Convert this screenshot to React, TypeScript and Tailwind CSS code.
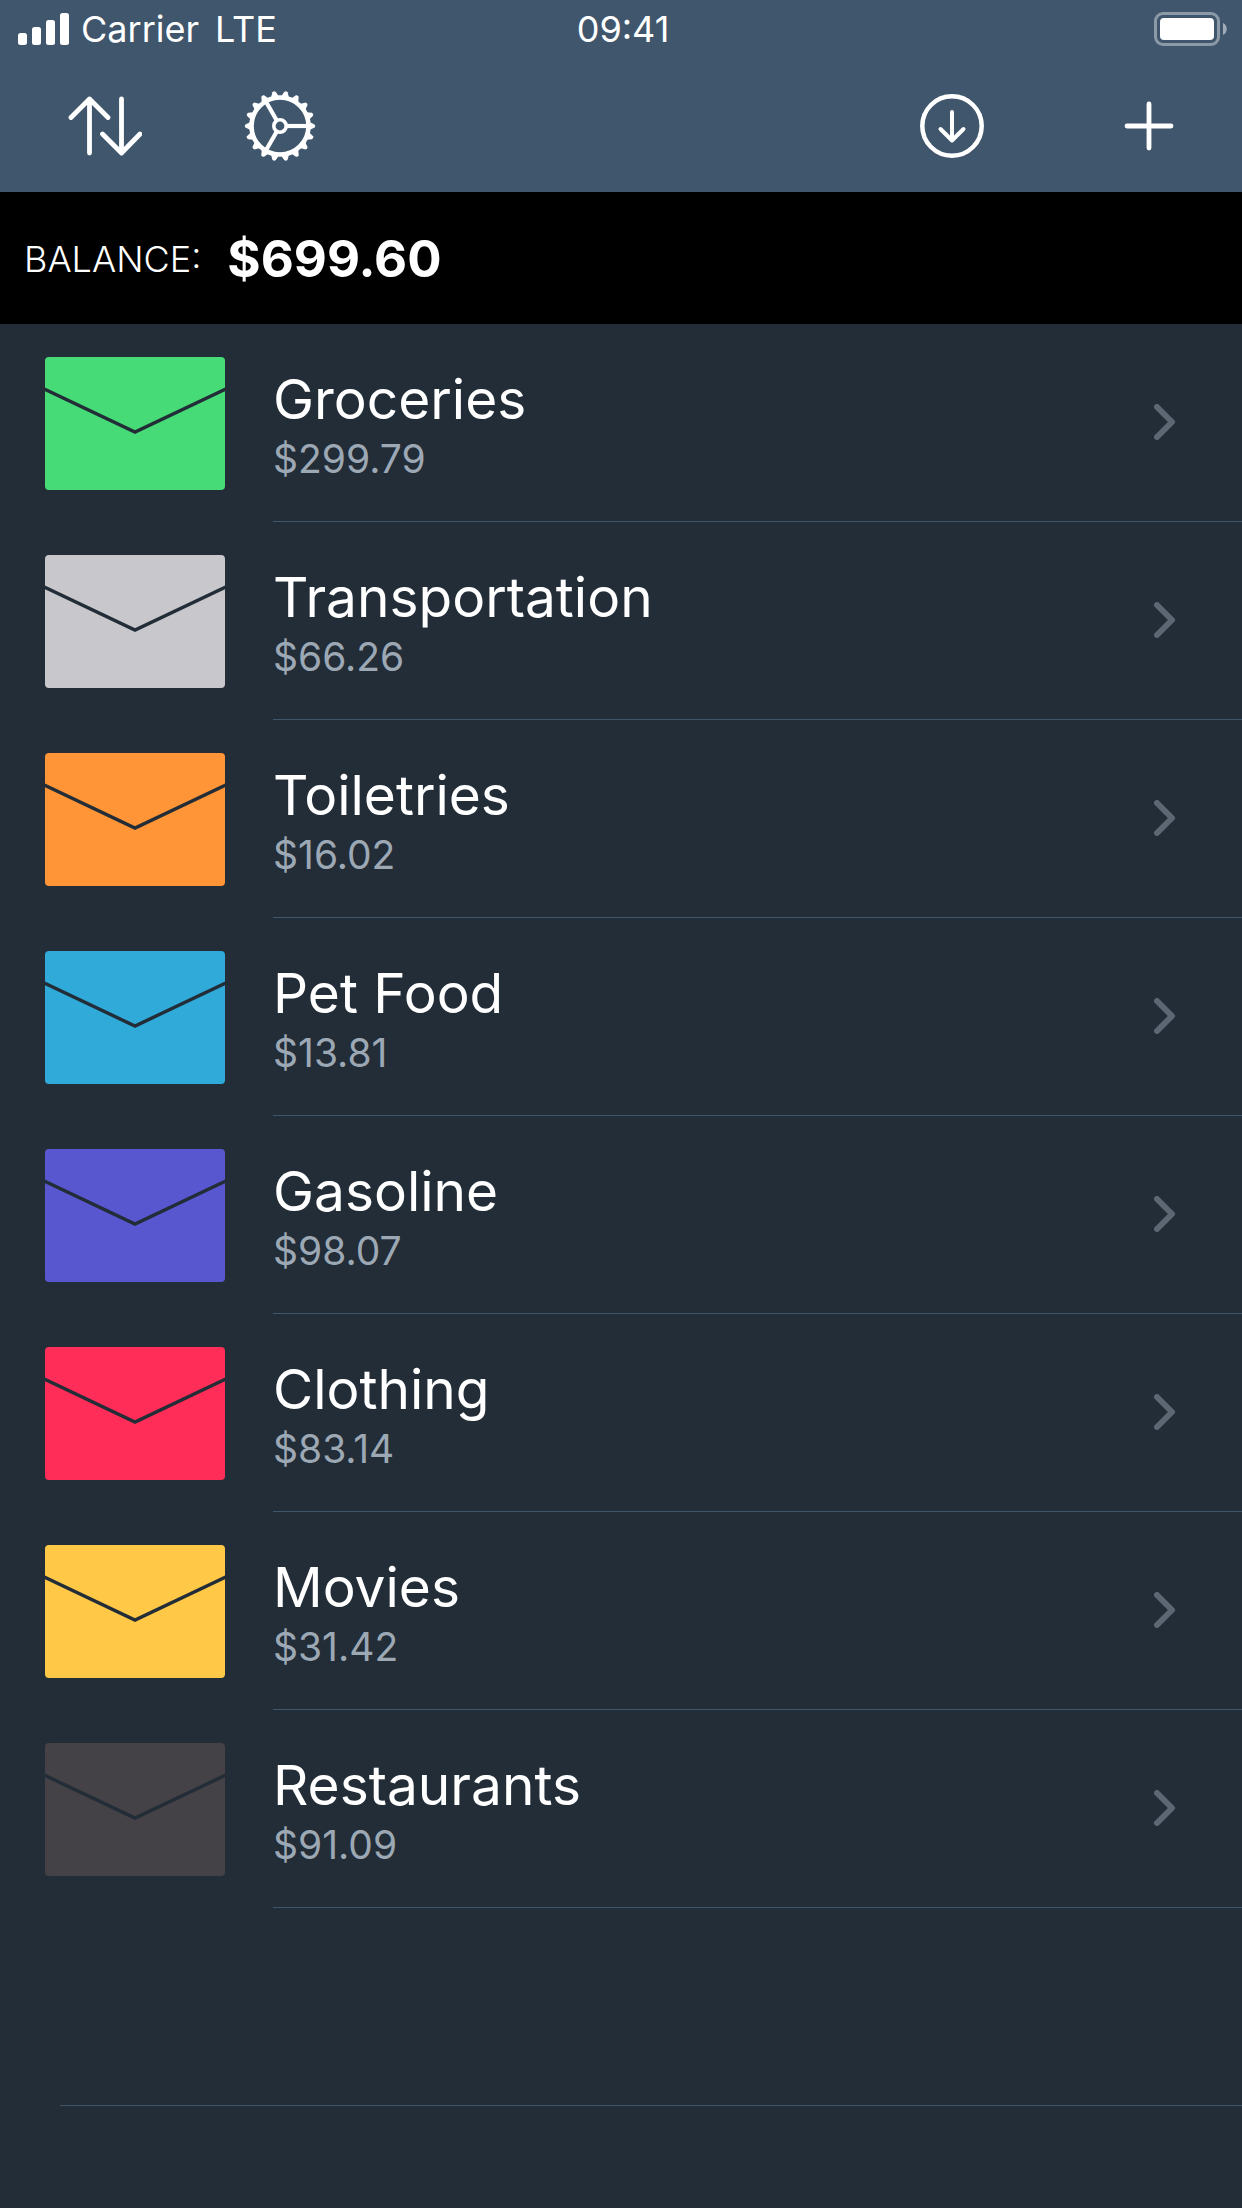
type Envelope = { name: string; amount: string; color: string };

const envelopes: Envelope[] = [
  { name: "Groceries", amount: "$299.79", color: "text-[#47db77]" },
  { name: "Transportation", amount: "$66.26", color: "text-[#c8c7cc]" },
  { name: "Toiletries", amount: "$16.02", color: "text-[#ff9536]" },
  { name: "Pet Food", amount: "$13.81", color: "text-[#30aad9]" },
  { name: "Gasoline", amount: "$98.07", color: "text-[#5957cf]" },
  { name: "Clothing", amount: "$83.14", color: "text-[#ff2d57]" },
  { name: "Movies", amount: "$31.42", color: "text-[#ffc847]" },
  { name: "Restaurants", amount: "$91.09", color: "text-[#444246]" },
];

const teeth = Array.from({ length: 18 }, (_, i) => i * 20);

function SignalIcon() {
  return (
    <svg width="51" height="32" viewBox="0 0 51 32" fill="currentColor" aria-hidden="true">
      <rect x="0" y="20" width="9" height="12" rx="2.5" />
      <rect x="14" y="14" width="9" height="18" rx="2.5" />
      <rect x="28" y="7" width="9" height="25" rx="2.5" />
      <rect x="42" y="0" width="9" height="32" rx="2.5" />
    </svg>
  );
}

function BatteryIcon() {
  return (
    <svg width="74" height="34" viewBox="0 0 74 34" fill="currentColor" aria-hidden="true">
      <rect x="1.5" y="1.5" width="63" height="31" rx="7.5" fill="none" stroke="currentColor" strokeWidth="3" opacity="0.4" />
      <rect x="6" y="6" width="54" height="22" rx="4" />
      <path d="M69 11C74 13 74 21 69 23Z" opacity="0.5" />
    </svg>
  );
}

function SortIcon() {
  return (
    <svg width="74" height="60" viewBox="0 0 74 60" fill="none" stroke="currentColor" strokeWidth="4.8" strokeLinecap="round" strokeLinejoin="round" aria-hidden="true">
      <path d="M21.5 57V3M3 21.5L21.5 3L40 21.5" />
      <path d="M53.5 3V57M34.5 38L53.5 57L72 38" />
    </svg>
  );
}

function GearIcon() {
  return (
    <svg width="72" height="72" viewBox="-36 -36 72 72" fill="none" stroke="currentColor" aria-hidden="true">
      <circle r="28.5" strokeWidth="4.6" />
      <circle r="6.2" strokeWidth="3.6" />
      {[0, 120, 240].map((a) => (
        <path key={a} d="M7 0H28" strokeWidth="4.2" transform={`rotate(${a})`} />
      ))}
      {teeth.map((a) => (
        <path key={a} d="M29.5 -4L34.6 -1.6Q36 0 34.6 1.6L29.5 4Z" fill="currentColor" stroke="none" transform={`rotate(${a})`} />
      ))}
    </svg>
  );
}

function DownloadIcon() {
  return (
    <svg width="64" height="64" viewBox="0 0 64 64" fill="none" stroke="currentColor" strokeWidth="4" strokeLinecap="round" strokeLinejoin="round" aria-hidden="true">
      <circle cx="32" cy="32" r="29.7" strokeWidth="4.5" />
      <path d="M32 18V46M20.5 35L32 46.5L43.5 35" />
    </svg>
  );
}

function PlusIcon() {
  return (
    <svg width="50" height="50" viewBox="0 0 50 50" fill="none" stroke="currentColor" strokeWidth="4.8" strokeLinecap="round" aria-hidden="true">
      <path d="M25 3V47M3 25H47" />
    </svg>
  );
}

function EnvelopeIcon({ color }: { color: string }) {
  return (
    <svg width="180" height="133" viewBox="0 0 180 133" className={`shrink-0 ${color}`} aria-hidden="true">
      <rect width="180" height="133" rx="4" fill="currentColor" />
      <path d="M-2 31.5L90 75L182 31.5" fill="none" stroke="#222d38" strokeWidth="3.4" />
    </svg>
  );
}

function ChevronIcon() {
  return (
    <svg width="22" height="36" viewBox="0 0 22 36" fill="none" stroke="currentColor" strokeWidth="6" strokeLinecap="round" strokeLinejoin="round" aria-hidden="true">
      <path d="M3 3L18 18L3 33" />
    </svg>
  );
}

export default function App() {
  return (
    <div className="min-h-screen bg-[#222d38] font-['Inter','Liberation_Sans',sans-serif] text-white">
      <header className="bg-[#40566c]">
        <div className="grid h-[58px] grid-cols-3 items-center pr-[14px] pl-[18px] text-[36px] leading-[42px]">
          <div className="flex items-center gap-3">
            <SignalIcon />
            <span className="flex gap-4 whitespace-nowrap">
              <span>Carrier</span>
              <span>LTE</span>
            </span>
          </div>
          <time className="text-center">09:41</time>
          <div className="flex justify-end">
            <BatteryIcon />
          </div>
        </div>
        <nav className="flex h-[134px] items-center justify-between pt-[2px] pr-[68px] pl-[68px]">
          <div className="flex items-center gap-[102px]">
            <button type="button" aria-label="Sort"><SortIcon /></button>
            <button type="button" aria-label="Settings"><GearIcon /></button>
          </div>
          <div className="flex items-center gap-[140px]">
            <button type="button" aria-label="Download"><DownloadIcon /></button>
            <button type="button" aria-label="Add envelope"><PlusIcon /></button>
          </div>
        </nav>
      </header>

      <section className="flex h-[132px] items-center gap-[26px] bg-black px-6 pt-[2px]">
        <span className="text-[36px] leading-[60px] font-light">BALANCE:</span>
        <span className="text-[51px] leading-[60px] font-bold">$699.60</span>
      </section>

      <main>
        <ul>
          {envelopes.map((e) => (
            <li key={e.name}>
              <a href="#" className="flex h-[198px] pl-[45px]">
                <span className="flex items-center">
                  <EnvelopeIcon color={e.color} />
                </span>
                <span className="ml-12 flex flex-1 items-center justify-between border-b border-[#3f556a] pr-[66px]">
                  <span className="flex flex-col pt-[10px]">
                    <span className="text-[55px] leading-[62px]">{e.name}</span>
                    <span className="text-[39px] leading-[58px] text-[#9da8b5]">{e.amount}</span>
                  </span>
                  <span className="pb-[2px] text-[#5d6673]">
                    <ChevronIcon />
                  </span>
                </span>
              </a>
            </li>
          ))}
        </ul>
        <div className="ml-[60px] h-[198px] border-b border-[#3f556a]" />
      </main>
    </div>
  );
}
